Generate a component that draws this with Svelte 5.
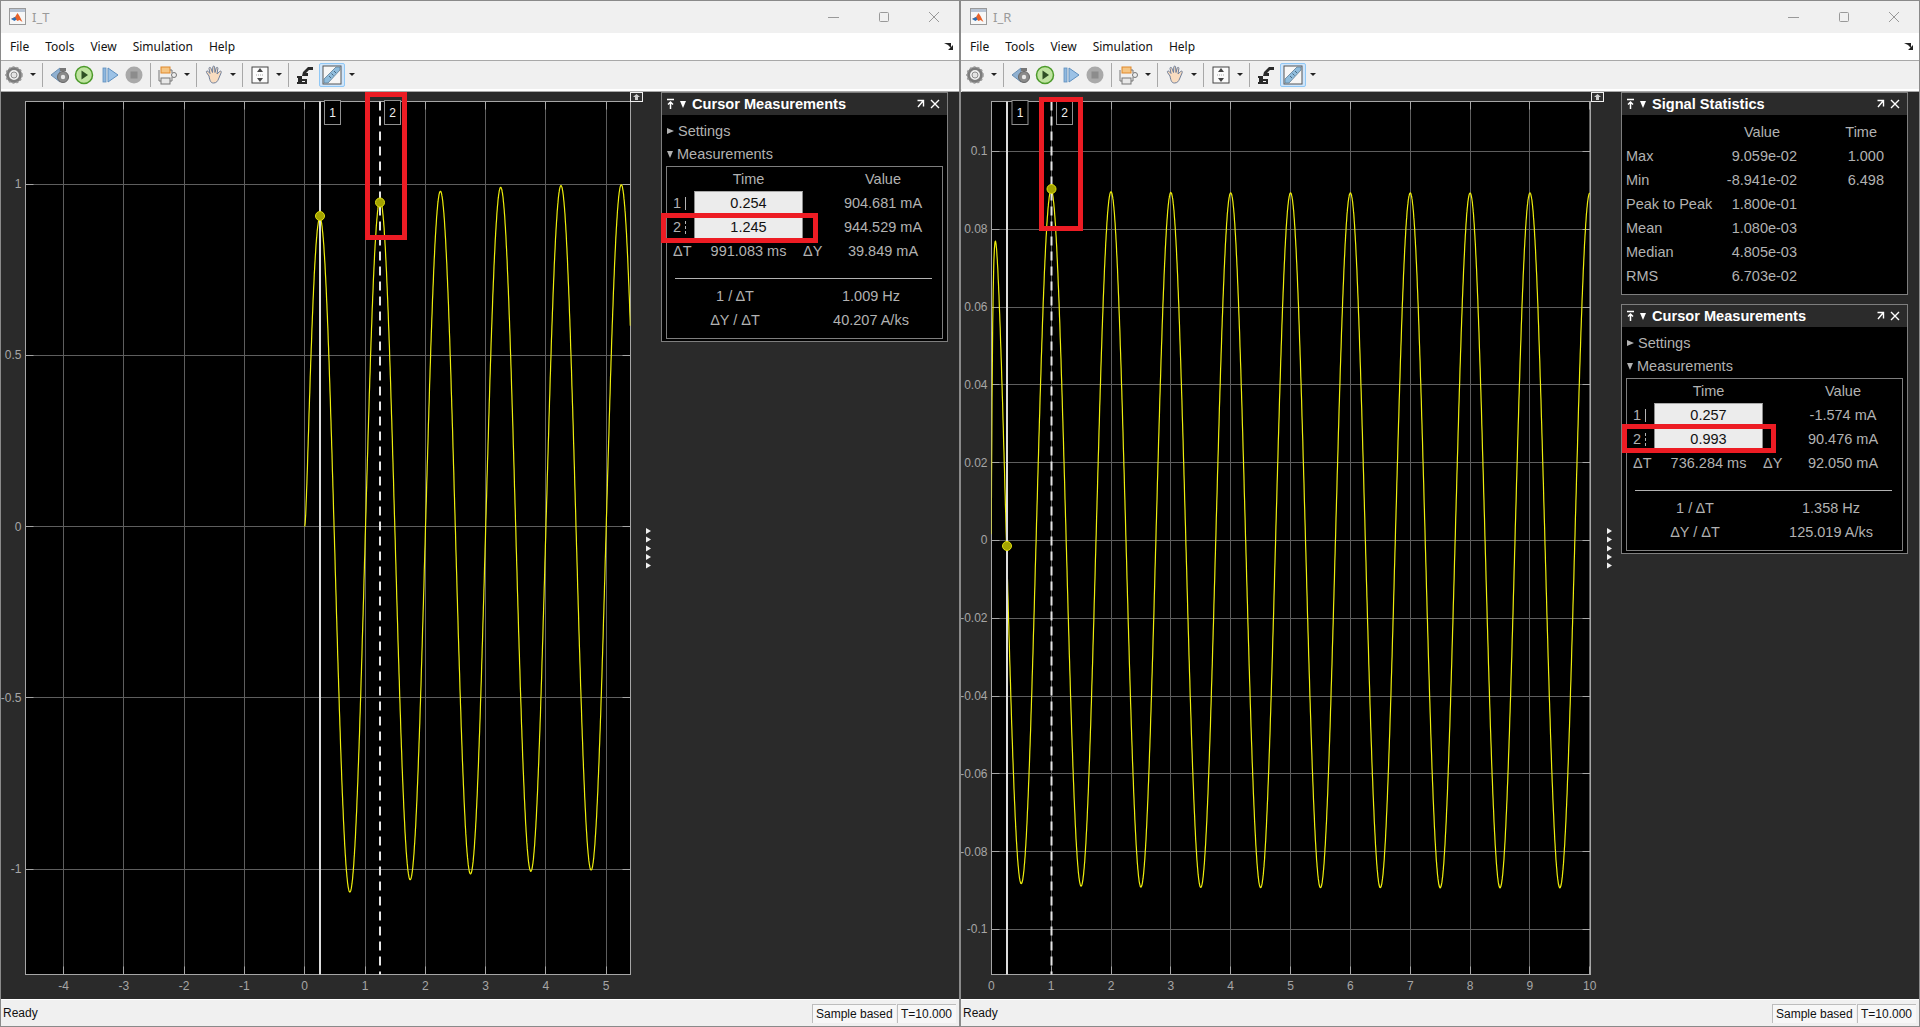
<script>
	// curves are sampled in page pixels, the svg viewBox uses the same numbers
	function curve(fn, tx, vy, tEnd) {
		const pts = [];
		for (let t = 0; t <= tEnd; t += 0.004) {
			pts.push(tx(t).toFixed(1) + ',' + vy(fn(t)).toFixed(1));
		}
		return pts.join(' ');
	}

	const leftTx = (t) => 304.7 + 60.3 * t;
	const leftVy = (v) => 526.5 - 342.5 * v;
	const rightTx = (t) => 991.3 + 59.85 * t;
	const rightVy = (v) => 540.4 - 3890 * v;

	const leftFn = (t) =>
		Math.sin(2 * Math.PI * t) - 0.12 * Math.exp(-t / 1.3) * (1 - Math.exp(-t / 0.02));
	const rightFn = (t) =>
		0.0893 * Math.cos(2 * Math.PI * t) -
		0.0893 * Math.exp(-t / 0.025) +
		0.0016 * Math.exp(-t / 1.2);

	const range = (a, b) => Array.from({ length: b - a + 1 }, (_, i) => a + i);

	const windows = [
		{
			title: 'I_T',
			origin: 1,
			axes: { l: 25.5, r: 630.5, t: 101.5, b: 974.5 },
			xTicks: range(-4, 5).map((t) => ({ label: String(t), x: leftTx(t) })),
			yTicks: [
				['1', 1],
				['0.5', 0.5],
				['0', 0],
				['-0.5', -0.5],
				['-1', -1]
			].map(([label, v]) => ({ label, y: leftVy(v) })),
			line: curve(leftFn, leftTx, leftVy, 5.4),
			cur1: { x: 320, box: 324.5, my: 216 },
			cur2: { x: 380, box: 384.5, my: 202.5 },
			arrowsX: 646,
			iconX: 630,
			stats: null,
			times: ['0.254', '1.245'],
			values: ['904.681 mA', '944.529 mA'],
			dT: '991.083 ms',
			dY: '39.849 mA',
			inv: '1.009 Hz',
			rate: '40.207 A/ks',
			marks: [
				{ x: 365, y: 92, w: 42, h: 148 },
				{ x: 661, y: 213, w: 157, h: 30 }
			]
		},
		{
			title: 'I_R',
			origin: 961,
			axes: { l: 991.5, r: 1590.5, t: 101.5, b: 974.5 },
			xTicks: range(0, 10).map((t) => ({ label: String(t), x: rightTx(t) })),
			yTicks: [
				['0.1', 0.1],
				['0.08', 0.08],
				['0.06', 0.06],
				['0.04', 0.04],
				['0.02', 0.02],
				['0', 0],
				['-0.02', -0.02],
				['-0.04', -0.04],
				['-0.06', -0.06],
				['-0.08', -0.08],
				['-0.1', -0.1]
			].map(([label, v]) => ({ label, y: rightVy(v) })),
			line: curve(rightFn, rightTx, rightVy, 10),
			cur1: { x: 1007, box: 1012, my: 546 },
			cur2: { x: 1051.5, box: 1056.5, my: 189 },
			arrowsX: 1607,
			iconX: 1591,
			stats: [
				['Max', '9.059e-02', '1.000'],
				['Min', '-8.941e-02', '6.498'],
				['Peak to Peak', '1.800e-01', ''],
				['Mean', '1.080e-03', ''],
				['Median', '4.805e-03', ''],
				['RMS', '6.703e-02', '']
			],
			times: ['0.257', '0.993'],
			values: ['-1.574 mA', '90.476 mA'],
			dT: '736.284 ms',
			dY: '92.050 mA',
			inv: '1.358 Hz',
			rate: '125.019 A/ks',
			marks: [
				{ x: 1039, y: 97, w: 44, h: 134 },
				{ x: 1622, y: 424, w: 154, h: 29 }
			]
		}
	];

	const crisp = (n) => Math.round(n - 0.5) + 0.5;
	const axisColor = '#a6a6a6';
</script>

{#snippet logo()}
	<svg class="logo" width="18" height="18" viewBox="0 0 18 18">
		<rect x="0.5" y="0.5" width="16" height="16" fill="#f7f7f7" stroke="#9a9a9a" />
		<rect x="1" y="1" width="15" height="3" fill="#b8c4d4" />
		<path d="M2 11l4-2 2.5-4 2 3 3 6-3-2-2 1-2-2z" fill="#e8622a" />
		<path d="M2 11l4-2 1.5 2.5-2 1.5z" fill="#2f6fb5" />
	</svg>
{/snippet}

{#snippet caret()}
	<span class="caret"></span>
{/snippet}

{#snippet toolbar()}
	<div class="toolbar">
		<svg class="tb first" viewBox="0 0 24 24">
			<circle cx="12" cy="12" r="6.5" fill="none" stroke="#7c7c7c" stroke-width="3" />
			<circle cx="12" cy="12" r="8" fill="none" stroke="#9a9a9a" stroke-width="1.6" stroke-dasharray="2 2" />
			<circle cx="12" cy="12" r="3" fill="#e4e4e4" stroke="#8f8f8f" />
		</svg>
		{@render caret()}
		<span class="sep m2"></span>
		<svg class="tb m5" viewBox="0 0 24 24">
			<path d="M3 12l9-7v14z" fill="#8fb0d0" stroke="#6b8fb2" />
			<circle cx="15" cy="14" r="5.5" fill="#8a8a8a" stroke="#666" />
			<circle cx="15" cy="14" r="2.2" fill="#e8e8e8" />
			<rect x="12" y="5" width="6" height="3" fill="#777" />
		</svg>
		<svg class="tb" viewBox="0 0 24 24">
			<circle cx="12" cy="12" r="8.5" fill="#bfe3a0" stroke="#4c9a2a" stroke-width="1.5" />
			<path d="M9.5 7.5l6.5 4.5-6.5 4.5z" fill="#2f4f24" />
		</svg>
		<svg class="tb m2" viewBox="0 0 24 24">
			<rect x="5" y="5" width="3" height="14" fill="#8fb8de" stroke="#5f90bf" stroke-width="0.8" />
			<path d="M10 5l10 7-10 7z" fill="#9cc2e6" stroke="#5f90bf" />
		</svg>
		<svg class="tb" viewBox="0 0 24 24">
			<circle cx="12" cy="12" r="8.5" fill="#a9a9a9" />
			<rect x="8.5" y="8.5" width="7" height="7" fill="#8c8c8c" />
		</svg>
		<span class="sep m4"></span>
		<svg class="tb m5" viewBox="0 0 24 24">
			<rect x="5" y="4" width="9" height="6" fill="#f5c583" stroke="#e0882a" />
			<rect x="5" y="15" width="9" height="6" fill="#e8e8e8" stroke="#777" />
			<circle cx="18" cy="12" r="2.5" fill="#eee" stroke="#777" />
			<path d="M14 7h2v3M14 18h2v-4M3 7v11h2" fill="none" stroke="#777" />
		</svg>
		{@render caret()}
		<span class="sep m2"></span>
		<svg class="tb m6" viewBox="0 0 24 24">
			<path
				d="M6 13L3.5 9.5c-.7-1 .6-2 1.5-1.2L7 10.5 6 5.5c-.2-1.2 1.4-1.6 1.8-.4L9.5 9.5 9.8 4c.1-1.2 1.7-1.2 1.8 0L12 9.5 13.2 5c.4-1.1 1.9-.7 1.7.4L14 11l2.8-2.6c.9-.8 2 .2 1.4 1.2L15.5 16c-.8 2-2 4-5 4-2.500 0-3.500-1.500-4.500-7z"
				fill="#f8dcc0"
				stroke="#6f7f9a"
				stroke-width="1"
			/>
		</svg>
		<span class="caret back"></span>
		<span class="sep m2"></span>
		<svg class="tb m5" viewBox="0 0 24 24">
			<rect x="4" y="4" width="16" height="16" fill="#fbfbfb" stroke="#444" />
			<path d="M12 5l3 4h-6zM12 19l3-4h-6z" fill="#444" />
			<path d="M8 12h8" stroke="#aaa" stroke-dasharray="1 1" />
		</svg>
		{@render caret()}
		<span class="sep m2"></span>
		<svg class="tb m4" viewBox="0 0 24 24">
			<path d="M10 9l5-5h5v3h-4l-3 3h2v3h-6v6h-4v-4h-1v-2h5z" fill="#2a2a2a" />
			<path d="M4 20h9v-3h-5v-4" fill="none" stroke="#2a2a2a" stroke-width="2" />
		</svg>
		<span class="tb-on m3">
			<svg width="22" height="22" viewBox="0 0 22 22">
				<rect x="2" y="2" width="18" height="18" fill="#f6f6f6" stroke="#555" />
				<path d="M3 15L15 3h4v3L7 19H3z" fill="#8fbcdc" stroke="#5f7f96" stroke-width="0.8" />
				<path d="M8 12l2 2M10.500 9.500l2 2M13 7l2 2" stroke="#4a6a80" />
			</svg>
		</span>
		{@render caret()}
	</div>
{/snippet}

{#snippet panelHead(name)}
	<div class="panel-head">
		<svg class="pin" width="10" height="12" viewBox="0 0 10 12">
			<path d="M1 1.500h7M4.500 4v7M2 6.500l2.500-2.500 2.500 2.500" fill="none" stroke="#fff" stroke-width="1.500" />
		</svg>
		<span class="head-tri"></span>
		<span class="head-name">{name}</span>
		<svg class="undock" width="10" height="10" viewBox="0 0 10 10">
			<path d="M1.500 1.500h6v6M7 2L2 8" fill="none" stroke="#fff" stroke-width="1.400" />
		</svg>
		<svg class="close" width="10" height="10" viewBox="0 0 10 10">
			<path d="M1 1l8 8M9 1l-8 8" fill="none" stroke="#fff" stroke-width="1.400" />
		</svg>
	</div>
{/snippet}

{#snippet plot(w)}
	<svg class="plot" width="660" height="907" viewBox="{w.origin} 92 660 907">
		<rect x={w.axes.l} y={w.axes.t} width={w.axes.r - w.axes.l} height={w.axes.b - w.axes.t} fill="#000" />
		<clipPath id="clip-{w.title}">
			<rect x={w.axes.l} y={w.axes.t} width={w.axes.r - w.axes.l} height={w.axes.b - w.axes.t} />
		</clipPath>
		{#each w.xTicks as tick}
			{@const x = crisp(tick.x)}
			<line x1={x} x2={x} y1={w.axes.t} y2={w.axes.b} stroke="#5e5e5e" />
			<line x1={x} x2={x} y1={w.axes.b - 8} y2={w.axes.b} stroke={axisColor} />
			<line x1={x} x2={x} y1={w.axes.t} y2={w.axes.t + 8} stroke={axisColor} />
			<text class="tick" x={tick.x} y="990" text-anchor="middle">{tick.label}</text>
		{/each}
		{#each w.yTicks as tick}
			{@const y = crisp(tick.y)}
			<line x1={w.axes.l} x2={w.axes.r} y1={y} y2={y} stroke="#5e5e5e" />
			<line x1={w.axes.l} x2={w.axes.l + 8} y1={y} y2={y} stroke={axisColor} />
			<line x1={w.axes.r - 8} x2={w.axes.r} y1={y} y2={y} stroke={axisColor} />
			<text class="tick" x={w.axes.l - 4} y={tick.y + 4} text-anchor="end">{tick.label}</text>
		{/each}
		<rect x={w.axes.l} y={w.axes.t} width={w.axes.r - w.axes.l} height={w.axes.b - w.axes.t} fill="none" stroke={axisColor} />
		<polyline points={w.line} fill="none" stroke="#eeee0c" stroke-width="1.200" clip-path="url(#clip-{w.title})" />
		<line x1={w.cur1.x} x2={w.cur1.x} y1={w.axes.t} y2={w.axes.b} stroke="#dcdcdc" stroke-width="2" />
		<line x1={w.cur2.x} x2={w.cur2.x} y1={w.axes.t} y2={w.axes.b} stroke="#e6e6e6" stroke-width="2" stroke-dasharray="9 6" />
		<circle cx={w.cur1.x} cy={w.cur1.my} r="4.500" fill="#a3a300" stroke="#e0e010" />
		<circle cx={w.cur2.x} cy={w.cur2.my} r="4.500" fill="#a3a300" stroke="#e0e010" />
		{#each [[w.cur1, '1'], [w.cur2, '2']] as [c, n]}
			<rect x={c.box} y="100.500" width="16" height="24" fill="#000" stroke="#909090" />
			<text class="cursor-num" x={c.box + 8} y="117" text-anchor="middle">{n}</text>
		{/each}
		<rect x={w.iconX + 0.5} y="92.500" width="12" height="9" fill="#333" stroke="#f0f0f0" />
		<path d="M{w.iconX + 6.500} 94l3.500 3h-2v3h-3v-3h-2z" fill="#cfcfcf" />
		{#each [528, 536.500, 545.500, 554, 562.500] as y}
			<path d="M{w.arrowsX} {y}l5 3-5 3z" fill="#f0f0f0" />
		{/each}
	</svg>
{/snippet}

{#snippet cursorPanel(w)}
	<section class="panel">
		{@render panelHead('Cursor Measurements')}
		<div class="tree"><span class="tri-r"></span>Settings</div>
		<div class="tree"><span class="tri-d"></span>Measurements</div>
		<div class="box">
			<div class="grid">
				<span></span><span class="c">Time</span><span></span><span class="c">Value</span>
				{#each w.times as time, i}
					<span class="row-id">{i + 1}<i class={i ? 'dash' : 'solid'}></i></span>
					<span class="input">{time}</span>
					<span></span>
					<span class="c">{w.values[i]}</span>
				{/each}
				<span class="row-id">ΔT</span><span class="c">{w.dT}</span><span class="mid">ΔY</span><span class="c">{w.dY}</span>
			</div>
			<hr />
			<div class="rate">
				<span>1 / ΔT</span><span>{w.inv}</span>
				<span>ΔY / ΔT</span><span>{w.rate}</span>
			</div>
		</div>
	</section>
{/snippet}

<div class="desk">
	{#each windows as w}
		<div class="win">
			<div class="titlebar">
				{@render logo()}
				<span class="win-title">{w.title}</span>
				<div class="controls">
					<svg width="12" height="12" viewBox="0 0 12 12"><path d="M0 6.500h11" stroke="#999" /></svg>
					<svg width="12" height="12" viewBox="0 0 12 12"><rect x="1.500" y="1.500" width="9" height="9" rx="1" fill="none" stroke="#999" /></svg>
					<svg width="12" height="12" viewBox="0 0 12 12"><path d="M1 1l10 10M11 1L1 11" stroke="#999" /></svg>
				</div>
			</div>
			<div class="menubar">
				<span>File</span><span>Tools</span><span>View</span><span>Simulation</span><span>Help</span>
				<svg class="menu-pin" width="10" height="8" viewBox="0 0 10 8">
					<path d="M0 1l7 0 0 5-3-3zM9 3v5H4z" fill="#222" />
				</svg>
			</div>
			{@render toolbar()}
			<div class="scope">
				{@render plot(w)}
				<div class="side">
					{#if w.stats}
						<section class="panel">
							{@render panelHead('Signal Statistics')}
							<div class="stats">
								<span></span><span class="h-val">Value</span><span class="h-time">Time</span>
								{#each w.stats as row}
									<span>{row[0]}</span><span class="r">{row[1]}</span><span class="r">{row[2]}</span>
								{/each}
							</div>
						</section>
					{/if}
					{@render cursorPanel(w)}
				</div>
			</div>
			<div class="status">
				<span class="ready">Ready</span>
				<span class="cell sample">Sample based</span>
				<span class="cell stamp">T=10.000</span>
			</div>
		</div>
		{#each w.marks as m}
			<div class="mark" style="left:{m.x}px;top:{m.y}px;width:{m.w}px;height:{m.h}px"></div>
		{/each}
	{/each}
</div>

<style>
	:global(body) {
		margin: 0;
		background: #f0f0f0;
	}

	.desk {
		position: relative;
		display: flex;
		width: 1920px;
		height: 1027px;
		overflow: hidden;
		font-family: 'Liberation Sans', Arial, sans-serif;
	}

	.win {
		display: flex;
		flex-direction: column;
		box-sizing: border-box;
		width: 961px;
		height: 1027px;
		border: 1px solid #8a8a8a;
		border-right-width: 2px;
		background: #f0f0f0;
	}

	.win:nth-of-type(n + 2) {
		width: 959px;
		border-left: none;
		border-right-width: 1px;
	}

	.titlebar {
		display: flex;
		align-items: center;
		flex: none;
		height: 32px;
		padding-left: 8px;
		background: #f0f0f0;
	}

	.win:nth-of-type(n + 2) .titlebar,
	.win:nth-of-type(n + 2) .toolbar {
		margin-left: 1px;
	}

	.win-title {
		margin-left: 5px;
		font: 13px 'Noto Sans', sans-serif;
		color: #9a9a9a;
	}

	.controls {
		display: flex;
		gap: 38px;
		margin-left: auto;
		margin-right: 19px;
	}

	.menubar {
		display: flex;
		align-items: center;
		flex: none;
		gap: 16px;
		box-sizing: border-box;
		height: 28px;
		padding-left: 9px;
		padding-bottom: 1px;
		background: #fff;
		border-bottom: 1px solid #a8a8a8;
		font: 12px 'Noto Sans', sans-serif;
		color: #111;
	}

	.menu-pin {
		margin-left: auto;
		margin-right: 5px;
	}

	.toolbar {
		display: flex;
		align-items: center;
		flex: none;
		box-sizing: border-box;
		height: 31px;
		padding-bottom: 3px;
		border-bottom: 1px solid #a8a8a8;
		box-shadow: inset 0 -2px 0 #fff;
		background: #f0f0f0;
	}

	.tb {
		flex: none;
		width: 24px;
		height: 24px;
	}

	.first {
		margin-left: 1px;
	}

	.caret {
		flex: none;
		width: 14px;
		height: 3px;
		position: relative;
	}

	.caret::before {
		content: '';
		position: absolute;
		left: 4px;
		top: 0;
		border-left: 3px solid transparent;
		border-right: 3px solid transparent;
		border-top: 3px solid #222;
	}

	.back {
		margin-left: -1px;
	}

	.sep {
		flex: none;
		width: 1px;
		height: 24px;
		background: #a8a8a8;
	}

	.m2 {
		margin-left: 2px;
	}

	.m3 {
		margin-left: 2px;
	}

	.m4 {
		margin-left: 4px;
	}

	.m5 {
		margin-left: 5px;
	}

	.m6 {
		margin-left: 6px;
	}

	.tb-on {
		display: flex;
		align-items: center;
		justify-content: center;
		flex: none;
		box-sizing: border-box;
		width: 26px;
		height: 24px;
		background: #cfe5fa;
		border: 1px solid #90c8f6;
		border-radius: 2px;
	}

	.scope {
		display: flex;
		flex: none;
		height: 907px;
		background: #2a2a2a;
		border-bottom: 1px solid #fff;
	}

	.plot {
		flex: none;
		display: block;
	}

	.tick {
		font: 12px 'Liberation Sans', Arial, sans-serif;
		fill: #a6a6a6;
	}

	.cursor-num {
		font: 12px 'Liberation Sans', Arial, sans-serif;
		fill: #f0f0f0;
	}

	.side {
		display: flex;
		flex-direction: column;
		gap: 9px;
		width: 287px;
		flex: none;
	}

	.panel {
		box-sizing: border-box;
		width: 287px;
		border: 1px solid #7e7e7e;
		background: #000;
		color: #b2b2b2;
		font-size: 14.500px;
		padding-bottom: 2px;
	}

	.panel-head {
		display: flex;
		align-items: center;
		height: 22px;
		background: #2b2b2b;
		color: #fff;
	}

	.pin {
		margin-left: 4px;
	}

	.head-tri {
		width: 0;
		height: 0;
		margin-left: 4px;
		border-left: 3.500px solid transparent;
		border-right: 3.500px solid transparent;
		border-top: 7px solid #fff;
	}

	.head-name {
		margin-left: 6px;
		font-weight: bold;
		font-size: 14.600px;
	}

	.undock {
		margin-left: auto;
	}

	.close {
		margin-left: 4px;
		margin-right: 7px;
	}

	.tree {
		display: flex;
		align-items: center;
		height: 23.500px;
		padding-left: 5px;
	}

	.tree:nth-of-type(2) {
		margin-top: 4px;
	}

	.tri-r,
	.tri-d {
		width: 0;
		height: 0;
		margin-right: 4px;
	}

	.tri-r {
		border-top: 3.500px solid transparent;
		border-bottom: 3.500px solid transparent;
		border-left: 7px solid #b2b2b2;
	}

	.tri-d {
		border-left: 3.500px solid transparent;
		border-right: 3.500px solid transparent;
		border-top: 7px solid #b2b2b2;
	}

	.box {
		box-sizing: border-box;
		width: 277px;
		margin-left: 4px;
		border: 1px solid #7e7e7e;
	}

	.grid {
		display: grid;
		grid-template-columns: 27px 109px 36px 88px;
		grid-auto-rows: 24px;
		align-items: center;
	}

	.c {
		text-align: center;
		white-space: nowrap;
	}

	.mid {
		padding-left: 0;
	}

	.row-id {
		display: flex;
		align-items: center;
		padding-left: 6px;
	}

	.row-id i {
		display: block;
		width: 0;
		height: 13px;
		margin-left: 4px;
	}

	.solid {
		border-left: 1px solid #b2b2b2;
	}

	.dash {
		border-left: 1px dashed #b2b2b2;
	}

	.input {
		box-sizing: border-box;
		height: 24px;
		line-height: 23px;
		text-align: center;
		background: #ececec;
		border: 1px solid #8c8c8c;
		border-top-color: #a8a8a8;
		color: #111;
	}

	hr {
		height: 1px;
		margin: 15px 10px 0 8px;
		border: none;
		background: #b2b2b2;
	}

	.rate {
		display: grid;
		grid-template-columns: 136px 136px;
		grid-auto-rows: 24px;
		align-items: center;
		justify-items: center;
		padding: 5px 0 6px;
	}

	.stats {
		display: grid;
		grid-template-columns: 100px 71px 87px;
		grid-auto-rows: 24px;
		align-items: center;
		padding: 5px 0 4px 4px;
	}

	.r {
		text-align: right;
	}

	.h-val {
		text-align: right;
		padding-right: 17px;
	}

	.h-time {
		text-align: right;
		padding-right: 7px;
	}

	.status {
		display: flex;
		align-items: center;
		flex: 1;
		gap: 1px;
		padding-right: 3px;
		background: #f0f0f0;
		font-size: 12px;
		color: #111;
	}

	.ready {
		margin-left: 2px;
		margin-right: auto;
	}

	.cell {
		box-sizing: border-box;
		height: 19px;
		line-height: 18px;
		padding-left: 3px;
		overflow: hidden;
		white-space: nowrap;
		border-top: 1px solid #bdbdbd;
		border-left: 1px solid #bdbdbd;
		background: #f7f7f7;
	}

	.sample {
		width: 84px;
	}

	.stamp {
		width: 59px;
	}

	.mark {
		position: absolute;
		box-sizing: border-box;
		border: 5px solid #ed1c24;
	}
</style>
